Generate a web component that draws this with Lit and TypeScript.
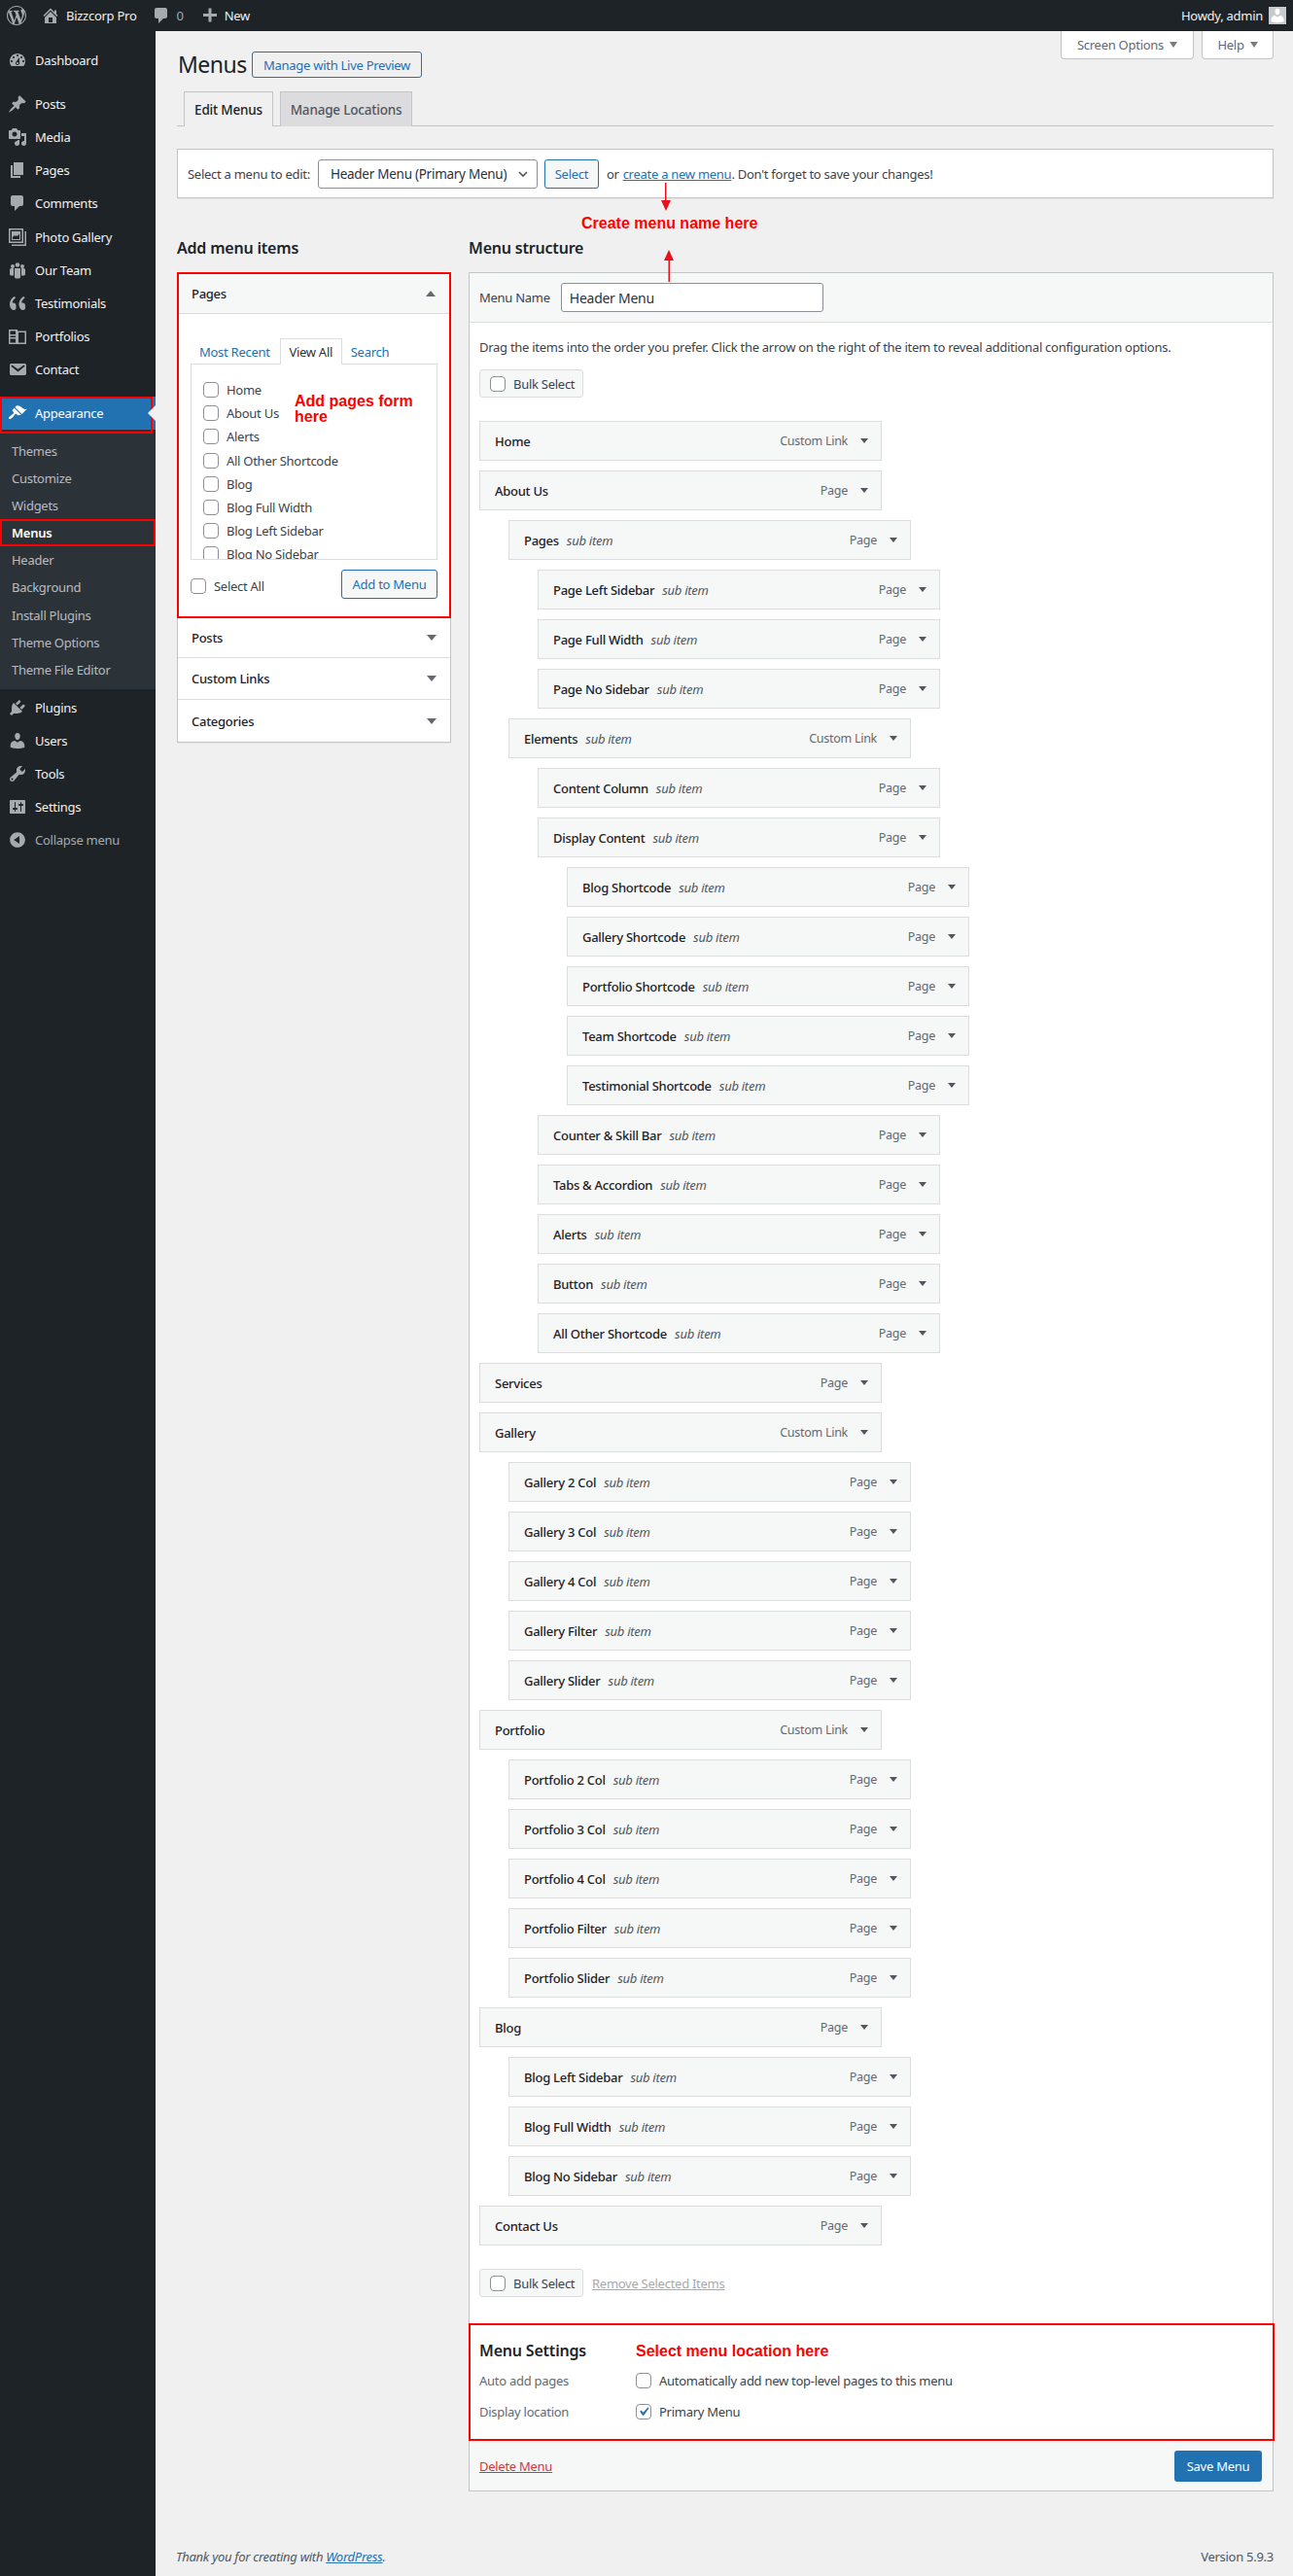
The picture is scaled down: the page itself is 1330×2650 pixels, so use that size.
import { LitElement, html, css, svg } from "lit";
import { customElement } from "lit/decorators.js";

const I: Record<string, any> = {
  wp: svg`<path d="M20 10c0-5.51-4.49-10-10-10C4.48 0 0 4.49 0 10c0 5.52 4.48 10 10 10 5.51 0 10-4.48 10-10zM7.78 15.37L4.37 6.22c.55-.02 1.17-.08 1.17-.08.5-.06.44-1.13-.06-1.11 0 0-1.45.11-2.37.11-.18 0-.37 0-.58-.01C4.12 2.69 6.87 1.11 10 1.11c2.33 0 4.45.87 6.05 2.34-.68-.11-1.65.39-1.65 1.58 0 .74.45 1.36.9 2.1.35.61.55 1.36.55 2.46 0 1.49-1.4 5-1.4 5l-3.03-8.37c.54-.02.82-.17.82-.17.5-.05.44-1.25-.06-1.22 0 0-1.44.12-2.38.12-.87 0-2.33-.12-2.33-.12-.5-.03-.56 1.2-.06 1.22l.92.08 1.26 3.41zM17.41 10c.24-.64.74-1.87.43-4.25.7 1.29 1.05 2.71 1.05 4.25 0 3.29-1.73 6.24-4.4 7.78.97-2.59 1.94-5.2 2.92-7.78zM6.1 18.09C3.12 16.65 1.11 13.53 1.11 10c0-1.3.23-2.48.72-3.59C3.25 10.3 4.67 14.2 6.1 18.09zm4.03-6.63l2.58 6.98c-.86.29-1.76.45-2.71.45-.79 0-1.57-.11-2.29-.33.81-2.38 1.62-4.74 2.42-7.1z"/>`,
  home: svg`<path d="M16 8.5l1.53 1.53-1.06 1.06L10 4.62l-6.47 6.47-1.06-1.06L10 2.5l4 4v-2h2v4zm-6-2.46l6 5.99V18H4v-5.97zM12 17v-5H8v5h4z"/>`,
  comment: svg`<path d="M5 2h9c1.1 0 2 .9 2 2v7c0 1.1-.9 2-2 2h-2l-5 5v-5H5c-1.1 0-2-.9-2-2V4c0-1.1.9-2 2-2z"/>`,
  plus: svg`<path d="M17 8v3h-5.500v5.500h-3V11H3V8h5.500V2.500h3V8z"/>`,
  dash: svg`<path d="M3.76 16h12.48c1.1-1.37 1.76-3.11 1.76-5 0-4.42-3.58-8-8-8s-8 3.58-8 8c0 1.89.66 3.63 1.76 5zM10 4c.55 0 1 .45 1 1s-.45 1-1 1-1-.45-1-1 .45-1 1-1zM6 6c.55 0 1 .45 1 1s-.45 1-1 1-1-.45-1-1 .45-1 1-1zm8 0c.55 0 1 .45 1 1s-.45 1-1 1-1-.45-1-1 .45-1 1-1zm-5.37 5.55L12 7v6c0 1.1-.9 2-2 2s-2-.9-2-2c0-.57.24-1.08.63-1.45zM4 10c.55 0 1 .45 1 1s-.45 1-1 1-1-.45-1-1 .45-1 1-1zm12 0c.55 0 1 .45 1 1s-.45 1-1 1-1-.45-1-1 .45-1 1-1zm-5 3c0-.55-.45-1-1-1s-1 .45-1 1 .45 1 1 1 1-.45 1-1z"/>`,
  post: svg`<path d="M10.44 3.02l1.82-1.82 6.36 6.35-1.83 1.82c-1.05-.68-2.48-.57-3.41.36l-.75.75c-.92.93-1.04 2.35-.35 3.41l-1.83 1.82-2.41-2.41-2.8 2.79c-.42.42-3.38 2.71-3.8 2.29s1.86-3.39 2.28-3.81l2.79-2.79L4.1 9.36l1.83-1.82c1.05.69 2.48.57 3.4-.36l.75-.75c.93-.92 1.05-2.35.36-3.41z"/>`,
  media: svg`<path d="M13 11V4c0-.55-.45-1-1-1h-1.67L9 1H5L3.67 3H2c-.55 0-1 .45-1 1v7c0 .55.45 1 1 1h10c.55 0 1-.45 1-1zM7 4.5c1.38 0 2.5 1.12 2.5 2.5S8.38 9.5 7 9.5 4.5 8.38 4.5 7 5.62 4.5 7 4.5zM14 6h5v10.5c0 1.38-1.12 2.5-2.5 2.5S14 17.88 14 16.5s1.12-2.5 2.5-2.5c.17 0 .34.02.5.05V9h-3V6zm-4 8.05V13h2v3.5c0 1.38-1.12 2.5-2.5 2.5S7 17.88 7 16.5 8.12 14 9.5 14c.17 0 .34.02.5.05z"/>`,
  page: svg`<path d="M6 15V2h10v13H6zm-1 1h8v2H3V5h2v11z"/>`,
  gallery: svg`<path fill-rule="evenodd" d="M1 1h15v15H1zM2.500 2.500v12h12v-12zM4 4h9v9H4zM5 12h7V6.500l-2 2.500-1-1-1 1.300-1-1.300-2 2zM17.500 4H19v15H4v-1.500h13.500z"/>`,
  team: svg`<circle cx="5" cy="6" r="2"/><circle cx="10" cy="4.500" r="2.300"/><circle cx="15" cy="6" r="2"/><path d="M2 9.500c0-1 1-1.500 2-1.500h2v7.500H4c-1 0-2-.5-2-1.500zM7 8h6v9c0 1-1 1.500-3 1.500S7 18 7 17zM14 8h2c1 0 2 .5 2 1.500V14c0 1-1 1.500-2 1.500h-2z"/>`,
  quote: svg`<path d="M8.54 12.74c0-.87-.24-1.61-.72-2.22-.73-.92-2.14-1.03-2.96-.85-.34-1.95 1.3-4.12 3.42-5.45L6.65 3C3.45 5.03 1.5 8.56 2.09 12.44c.42 2.75 2.09 4.56 4.06 4.56 1.22 0 2.39-.9 2.39-2.26v-2zm9.52 0c0-.87-.24-1.61-.72-2.22-.73-.92-2.14-1.03-2.96-.85-.33-1.95 1.3-4.12 3.43-5.45L16.17 3c-3.2 2.03-5.15 5.56-4.56 9.44.42 2.75 2.09 4.56 4.05 4.56 1.22 0 2.4-.9 2.4-2.26v-2z"/>`,
  folio: svg`<path fill-rule="evenodd" d="M1 3h9v1.500h9V18H1zM2.500 4.500V8H8V4.500zM2.500 9.500V11H8V9.500zM2.500 12.500v4H8v-4zM11 6v10.500h6.500V6z"/>`,
  mail: svg`<path d="M3.87 4h13.25C18.37 4 19 4.59 19 5.79v8.42c0 1.19-.63 1.79-1.88 1.79H3.87c-1.25 0-1.88-.6-1.88-1.79V5.79c0-1.2.63-1.79 1.88-1.79zm6.62 8.6l6.74-5.53c.24-.2.43-.66.13-1.07-.29-.41-.82-.42-1.17-.17l-5.7 3.86L4.8 5.83c-.35-.25-.88-.24-1.17.17-.3.41-.11.87.13 1.07z"/>`,
  brush: svg`<path d="M14.48 11.06L7.41 3.99l1.5-1.5c.5-.56 2.3-.47 3.51.32 1.21.8 1.43 1.28 2.91 2.1 1.18.64 2.45 1.26 4.45.85zm-.71.71L6.7 4.7 4.93 6.47c-.39.39-.39 1.02 0 1.41l1.06 1.06c.39.39.39 1.03 0 1.42-.6.6-1.43 1.11-2.21 1.69-.35.26-.7.53-1.01.84C1.43 13.23.4 14.98 1.2 15.78c.8.79 2.55-.23 3.91-1.57.31-.31.58-.66.85-1.02.57-.78 1.08-1.61 1.69-2.21.39-.39 1.02-.39 1.41 0l1.06 1.06c.39.39 1.02.39 1.41 0z"/>`,
  plug: svg`<path d="M13.11 4.36L9.87 7.6 8 5.73l3.24-3.24c.35-.34 1.05-.2 1.56.32.52.51.66 1.21.31 1.55zm-8 1.77l.91-1.12 9.01 9.01-1.19.84c-.71.71-2.63 1.16-3.82 1.16H6.14L4.9 17.26c-.59.59-1.54.59-2.12 0-.59-.58-.59-1.53 0-2.12l1.24-1.24v-3.88c0-1.13.4-3.19 1.09-3.89zm7.26 3.97l3.24-3.24c.34-.35 1.04-.21 1.55.31.52.51.66 1.21.31 1.55l-3.24 3.25z"/>`,
  users: svg`<path d="M10 9.25c-2.27 0-2.73-3.44-2.73-3.44C7 4.02 7.82 2 9.97 2c2.16 0 2.98 2.02 2.71 3.81 0 0-.41 3.44-2.68 3.44zm0 2.57L12.72 10c2.39 0 4.52 2.33 4.52 4.53v2.49s-3.65 1.13-7.24 1.13c-3.65 0-7.24-1.13-7.24-1.13v-2.49c0-2.25 1.94-4.48 4.47-4.48z"/>`,
  tools: svg`<path d="M16.68 9.77c-1.34 1.34-3.3 1.67-4.95.99l-5.41 6.52c-.99.99-2.59.99-3.58 0s-.99-2.59 0-3.57l6.52-5.42c-.68-1.65-.35-3.61.99-4.95 1.28-1.28 3.12-1.62 4.72-1.06l-2.89 2.89 2.82 2.82 2.86-2.87c.53 1.58.18 3.39-1.08 4.65zM3.81 16.21c.4.39 1.04.39 1.43 0 .4-.4.4-1.04 0-1.43-.39-.4-1.03-.4-1.43 0-.39.39-.39 1.03 0 1.43z"/>`,
  settings: svg`<path d="M18 16V4c0-.55-.45-1-1-1H3c-.55 0-1 .45-1 1v12c0 .55.45 1 1 1h14c.55 0 1-.45 1-1zM8 11h1c.55 0 1 .45 1 1s-.45 1-1 1H8v1.5c0 .28-.22.5-.5.5s-.5-.22-.5-.5V13H6c-.55 0-1-.45-1-1s.45-1 1-1h1V5.5c0-.28.22-.5.5-.5s.5.22.5.5V11zm5-2h-1c-.55 0-1-.45-1-1s.45-1 1-1h1V5.5c0-.28.22-.5.5-.5s.5.22.5.5V7h1c.55 0 1 .45 1 1s-.45 1-1 1h-1v5.5c0 .28-.22.5-.5.5s-.5-.22-.5-.5V9z"/>`,
  collapse: svg`<path fill-rule="evenodd" d="M10 2.16c4.33 0 7.84 3.51 7.84 7.84s-3.51 7.84-7.84 7.84S2.16 14.33 2.16 10 5.67 2.16 10 2.16zM12 13.88V6.12L6.18 10z"/>`,
};

const icon = (n: string, cls = "ic") => html`<svg class=${cls} viewBox="0 0 20 20" fill="currentColor" aria-hidden="true">${I[n]}</svg>`;
const tri = (up = false) => html`<span class=${up ? "tri up" : "tri"}></span>`;

const TOP1: [string, string][] = [["Posts", "post"], ["Media", "media"], ["Pages", "page"], ["Comments", "comment"], ["Photo Gallery", "gallery"], ["Our Team", "team"], ["Testimonials", "quote"], ["Portfolios", "folio"], ["Contact", "mail"]];
const SUB = ["Themes", "Customize", "Widgets", "Menus", "Header", "Background", "Install Plugins", "Theme Options", "Theme File Editor"];
const TOP2: [string, string][] = [["Plugins", "plug"], ["Users", "users"], ["Tools", "tools"], ["Settings", "settings"]];
const PAGES = ["Home", "About Us", "Alerts", "All Other Shortcode", "Blog", "Blog Full Width", "Blog Left Sidebar", "Blog No Sidebar"];
const ITEMS: [string, string, number][] = [
  ["Home", "Custom Link", 0], ["About Us", "Page", 0], ["Pages", "Page", 1], ["Page Left Sidebar", "Page", 2], ["Page Full Width", "Page", 2], ["Page No Sidebar", "Page", 2],
  ["Elements", "Custom Link", 1], ["Content Column", "Page", 2], ["Display Content", "Page", 2], ["Blog Shortcode", "Page", 3], ["Gallery Shortcode", "Page", 3], ["Portfolio Shortcode", "Page", 3], ["Team Shortcode", "Page", 3], ["Testimonial Shortcode", "Page", 3],
  ["Counter & Skill Bar", "Page", 2], ["Tabs & Accordion", "Page", 2], ["Alerts", "Page", 2], ["Button", "Page", 2], ["All Other Shortcode", "Page", 2], ["Services", "Page", 0],
  ["Gallery", "Custom Link", 0], ["Gallery 2 Col", "Page", 1], ["Gallery 3 Col", "Page", 1], ["Gallery 4 Col", "Page", 1], ["Gallery Filter", "Page", 1], ["Gallery Slider", "Page", 1],
  ["Portfolio", "Custom Link", 0], ["Portfolio 2 Col", "Page", 1], ["Portfolio 3 Col", "Page", 1], ["Portfolio 4 Col", "Page", 1], ["Portfolio Filter", "Page", 1], ["Portfolio Slider", "Page", 1],
  ["Blog", "Page", 0], ["Blog Left Sidebar", "Page", 1], ["Blog Full Width", "Page", 1], ["Blog No Sidebar", "Page", 1], ["Contact Us", "Page", 0],
];

@customElement("app-root")
export class AppRoot extends LitElement {
  static styles = css`
    :host { display: block; position: relative; width: 1330px; height: 2650px; overflow: hidden; background: #f0f0f1; color: #3c434a; font: 13px/20px "Noto Sans", sans-serif; letter-spacing: -0.27px; }
    * { box-sizing: border-box; }
    a { color: #2271b1; }
    .bar { height: 32px; background: #1d2327; color: #f0f0f1; display: flex; align-items: center; }
    .bar .ic { width: 20px; height: 20px; color: #a7aaad; flex: none; }
    .bar .wp { margin-left: 7px; }
    .bar .home { margin-left: 15px; }
    .bar .t { margin-left: 6px; }
    .bar .cm { margin-left: 16px; }
    .bar .zero { margin-left: 5px; color: #a7aaad; }
    .bar .pl { margin-left: 17px; }
    .bar .n { margin-left: 5px; }
    .howdy { margin-left: auto; margin-right: 6px; }
    .avatar { width: 18px; height: 18px; background: #c9cacb; margin-right: 7px; display: flex; align-items: flex-end; justify-content: center; overflow: hidden; }
    .avatar svg { width: 18px; height: 18px; color: #fff; }
    .shell { display: flex; align-items: flex-start; }
    .side { width: 160px; height: 2618px; background: #1d2327; padding-top: 13px; flex: none; position: relative; }
    .mi { height: 34.1px; display: flex; align-items: center; color: #f0f0f1; font-size: 13px; }
    .mi .ic { width: 20px; height: 20px; margin: 0 8px; color: #a7aaad; flex: none; }
    .mi.dim { color: #a7aaad; }
    .sep { height: 11px; }
    .sep2 { height: 11px; }
    .mi.cur { background: #2271b1; color: #fff; position: relative; height: 34px; }
    .mi.cur .ic { color: #fff; }
    .mi.cur::after { content: ""; position: absolute; right: 0; top: 9px; border: 8px solid transparent; border-right-color: #f0f0f1; border-left-width: 0; }
    .mi.cur::before { content: ""; position: absolute; left: 0; top: 0; width: 153px; height: 34px; border: 2px solid #f00; }
    .subm { background: #2c3338; padding: 8px 0 6px; margin-bottom: 2px; }
    .si { height: 28.1px; display: flex; align-items: center; padding-left: 12px; color: #b8bcc0; font-size: 13px; position: relative; }
    .si.on { color: #fff; font-weight: 600; outline: 2px solid #f00; outline-offset: -2px; }
    .main { flex: 1; position: relative; padding: 21px 20px 0 22px; min-width: 0; }
    .meta { position: absolute; right: 20px; top: 0; display: flex; gap: 8px; }
    .mt { height: 29px; background: #fff; border: 1px solid #c3c4c7; border-top: 0; border-radius: 0 0 4px 4px; color: #646970; display: flex; align-items: center; justify-content: center; gap: 6px; white-space: nowrap; }
    .mt .tri { border-top-color: #787c82; border-width: 6px 4px 0; }
    .mt.opt { width: 137px; }
    .mt.hlp { width: 74px; }
    .head { display: flex; align-items: center; height: 27px; padding-left: 1px; gap: 9px; }
    h1 { margin: 0; font-size: 23px; font-weight: 400; color: #1d2327; line-height: 29px; letter-spacing: -0.5px; width: 67px; }
    .btn { border: 1px solid #2271b1; border-radius: 3px; color: #2271b1; background: #f6f7f7; display: inline-flex; align-items: center; justify-content: center; }
    .head .btn { width: 175px; height: 27px; background: #f0f0f1; }
    .tabs { margin-top: 14px; height: 36px; border-bottom: 1px solid #c3c4c7; display: flex; gap: 7px; padding-left: 7px; }
    .tab { height: 36px; border: 1px solid #c3c4c7; border-bottom: 0; background: #dcdcde; color: #50575e; font-weight: 500; font-size: 13.5px; letter-spacing: -0.2px; display: flex; align-items: center; justify-content: center; width: 136px; }
    .tab.act { background: #f0f0f1; color: #1d2327; width: 92px; }
    .selbar { margin-top: 23px; height: 51px; background: #fff; border: 1px solid #c3c4c7; display: flex; align-items: center; padding-left: 10px; box-shadow: 0 1px 1px rgba(0,0,0,.04); }
    .sel { width: 226px; height: 30px; margin-left: 8px; border: 1px solid #8c8f94; border-radius: 3px; background: #fff; color: #2c3338; display: flex; align-items: center; justify-content: space-between; padding: 0 8px 0 12px; font-size: 13.5px; }
    .sel svg { width: 12px; height: 12px; color: #50575e; }
    .selbar .btn { width: 56px; height: 30px; margin: 0 8px 0 7px; }
    .selbar a { margin: 0 0 0 4px; }
    .cols { display: flex; gap: 18px; margin-top: 41px; align-items: flex-start; }
    .left { width: 282px; flex: none; }
    .right { width: 828px; flex: none; }
    h2 { margin: 0 0 15px; font-size: 16px; line-height: 20px; font-weight: 600; color: #1d2327; letter-spacing: -0.2px; }
    .acc { background: #fff; border: 1px solid #c3c4c7; border-top: 0; box-shadow: 0 1px 1px rgba(0,0,0,.04); }
    .open { border: 2px solid #f00; height: 356px; margin: 0; background: #fff; position: relative; }
    .ah { height: 41px; display: flex; align-items: center; justify-content: space-between; padding: 0 14px 0 13px; font-weight: 500; color: #1d2327; background: #f6f7f7; border-bottom: 1px solid #dcdcde; }
    .row { height: 43px; display: flex; align-items: center; justify-content: space-between; padding: 0 14px; font-weight: 500; color: #1d2327; border-bottom: 1px solid #dcdcde; background: #fff; }
    .row:first-child { height: 41px; }
    .row:last-child { border-bottom: 0; }
    .tri { width: 0; height: 0; border: solid transparent; border-width: 6px 5px 0; border-top-color: #646970; flex: none; }
    .tri.up { border-width: 0 5px 6px; border-bottom-color: #646970; }
    .ptabs { display: flex; margin: 25px 0 0 12px; height: 26px; align-items: flex-end; position: relative; z-index: 1; }
    .ptabs a { text-decoration: none; height: 25px; display: flex; align-items: center; }
    .ptabs .m { padding: 0 9px; }
    .ptabs .v { width: 64px; justify-content: center; background: #fff; border: 1px solid #dcdcde; border-bottom: 0; color: #2c3338; height: 27px; margin-bottom: -1px; margin-left: 1px; }
    .panel { margin: 0 12px 0 12px; height: 202px; border: 1px solid #dcdcde; overflow: hidden; padding: 14px 12px 0; }
    .ck { display: flex; align-items: center; height: 24.2px; gap: 8px; color: #3c434a; }
    .cb { width: 16px; height: 16px; flex: none; border: 1px solid #8c8f94; border-radius: 4px; background: #fff; display: inline-flex; align-items: center; justify-content: center; }
    .cb svg { width: 18px; height: 18px; color: #2271b1; flex: none; }
    .pf { display: flex; justify-content: space-between; align-items: center; margin: 10px 12px 0; height: 30px; }
    .pf .btn { width: 99px; height: 30px; }
    .pf .ck { margin-top: 4px; }
    .mh { height: 52px; background: #f6f7f7; border: 1px solid #c3c4c7; border-bottom-color: #dcdcde; display: flex; align-items: center; padding: 0 10px; gap: 11px; }
    .mh input { width: 270px; height: 30px; border: 1px solid #8c8f94; border-radius: 3px; padding: 0 8px; font: inherit; font-size: 14px; letter-spacing: inherit; color: #2c3338; background: #fff; }
    .mb { background: #fff; border: 1px solid #c3c4c7; border-width: 0 1px; padding: 15px 10px 27px; }
    .drag { height: 20px; margin-bottom: 13px; }
    .bulk { width: 107px; height: 29px; border: 1px solid #dcdcde; border-radius: 3px; background: #f6f7f7; display: flex; align-items: center; gap: 8px; padding-left: 10px; color: #3c434a; }
    .list { margin: 24px 0 24px; display: flex; flex-direction: column; gap: 10px; }
    .it { width: 414px; height: 41px; background: #f6f7f7; border: 1px solid #dcdcde; display: flex; align-items: center; padding: 0 13px 0 15px; }
    .it b { font-weight: 500; color: #1d2327; }
    .it i { margin-left: 8px; color: #50575e; }
    .it .ty { margin-left: auto; color: #646970; margin-right: 13px; font-size: 12.5px; }
    .it .tri { border-width: 5px 4px 0; border-top-color: #50575e; }
    .bf { display: flex; align-items: center; gap: 9px; }
    .bf a { color: #a7aaad; }
    .sets { height: 121px; background: #fff; border: 2px solid #f00; margin: 0 -1px 0 0; padding: 16px 9px 0; position: relative; }
    .sets h3 { margin: 0 0 11px; font-size: 16px; font-weight: 600; line-height: 20px; color: #1d2327; letter-spacing: -0.2px; }
    .sr { display: flex; height: 32px; align-items: flex-start; }
    .sr > span { width: 161px; color: #646970; }
    .sr .ck { height: 20px; }
    .mf { height: 52px; background: #f6f7f7; border: 1px solid #c3c4c7; border-top: 0; display: flex; align-items: center; justify-content: space-between; padding: 0 11px 0 10px; }
    .mf a { color: #d63638; }
    .save { width: 90px; height: 32px; background: #2271b1; color: #fff; border-radius: 3px; display: flex; align-items: center; justify-content: center; }
    .foot { margin-top: 57px; margin-left: -1px; display: flex; justify-content: space-between; color: #50575e; }
    .foot i a { color: #2271b1; }
    .note { position: absolute; color: #f00; font: bold 16px/16px "Liberation Sans", sans-serif; letter-spacing: 0; white-space: nowrap; }
    .arrow { position: absolute; }
  `;

  render() {
    return html`
      <div class="bar">
        ${icon("wp", "ic wp")}
        ${icon("home", "ic home")}<span class="t">Bizzcorp Pro</span>
        ${icon("comment", "ic cm")}<span class="zero">0</span>
        ${icon("plus", "ic pl")}<span class="n">New</span>
        <span class="howdy">Howdy, admin</span>
        <span class="avatar"><svg viewBox="0 0 20 20" fill="currentColor">${I.users}</svg></span>
      </div>
      <div class="shell">
        <nav class="side">
          <div class="mi">${icon("dash")}Dashboard</div>
          <div class="sep"></div>
          ${TOP1.map(([t, i]) => html`<div class="mi">${icon(i)}${t}</div>`)}
          <div class="sep2"></div>
          <div class="mi cur">${icon("brush")}Appearance</div>
          <div class="subm">${SUB.map((s) => html`<div class=${s === "Menus" ? "si on" : "si"}>${s}</div>`)}</div>
          ${TOP2.map(([t, i]) => html`<div class="mi">${icon(i)}${t}</div>`)}
          <div class="mi dim">${icon("collapse")}Collapse menu</div>
        </nav>
        <main class="main">
          <div class="meta">
            <div class="mt opt">Screen Options ${tri()}</div>
            <div class="mt hlp">Help ${tri()}</div>
          </div>
          <div class="head"><h1>Menus</h1><span class="btn">Manage with Live Preview</span></div>
          <div class="tabs"><div class="tab act">Edit Menus</div><div class="tab">Manage Locations</div></div>
          <div class="selbar">
            <span>Select a menu to edit:</span>
            <div class="sel"><span>Header Menu (Primary Menu)</span><svg viewBox="0 0 12 12" fill="none" stroke="currentColor" stroke-width="1.6"><path d="M2 4l4 4 4-4"/></svg></div>
            <span class="btn">Select</span>
            <span>or</span><a href="#">create a new menu</a><span>. Don't forget to save your changes!</span>
          </div>
          <div class="cols">
            <section class="left">
              <h2>Add menu items</h2>
              <div class="open">
                <div class="ah">Pages ${tri(true)}</div>
                <div class="ptabs"><a class="m" href="#">Most Recent</a><a class="v" href="#">View All</a><a class="m" href="#">Search</a></div>
                <div class="panel">${PAGES.map((p) => html`<div class="ck"><span class="cb"></span>${p}</div>`)}</div>
                <div class="pf"><div class="ck"><span class="cb"></span>Select All</div><span class="btn">Add to Menu</span></div>
              </div>
              <div class="acc">
                <div class="row">Posts ${tri()}</div>
                <div class="row">Custom Links ${tri()}</div>
                <div class="row">Categories ${tri()}</div>
              </div>
            </section>
            <section class="right">
              <h2>Menu structure</h2>
              <div class="mh"><label>Menu Name</label><input value="Header Menu" /></div>
              <div class="mb">
                <div class="drag">Drag the items into the order you prefer. Click the arrow on the right of the item to reveal additional configuration options.</div>
                <div class="bulk"><span class="cb"></span>Bulk Select</div>
                <div class="list">
                  ${ITEMS.map(([t, ty, d]) => html`<div class="it" style="margin-left:${d * 30}px"><b>${t}</b>${d > 0 ? html`<i>sub item</i>` : ""}<span class="ty">${ty}</span>${tri()}</div>`)}
                </div>
                <div class="bf"><div class="bulk"><span class="cb"></span>Bulk Select</div><a href="#">Remove Selected Items</a></div>
              </div>
              <div class="sets">
                <h3>Menu Settings</h3>
                <div class="sr"><span>Auto add pages</span><div class="ck"><span class="cb"></span>Automatically add new top-level pages to this menu</div></div>
                <div class="sr"><span>Display location</span><div class="ck"><span class="cb"><svg viewBox="0 0 20 20" fill="currentColor"><path d="M14.83 4.89l1.34.94-5.81 8.38H9.02L5.78 9.67l1.34-1.25 2.57 2.4z"/></svg></span>Primary Menu</div></div>
              </div>
              <div class="mf"><a href="#">Delete Menu</a><span class="save">Save Menu</span></div>
            </section>
          </div>
          <div class="foot"><i>Thank you for creating with <a href="#">WordPress</a>.</i><span>Version 5.9.3</span></div>
        </main>
      </div>
      <span class="note" style="left:303px;top:405px">Add pages form<br />here</span>
      <span class="note" style="left:598px;top:222px">Create menu name here</span>
      <span class="note" style="left:654px;top:2411px">Select menu location here</span>
      <svg class="arrow" style="left:678px;top:188px" width="14" height="30" viewBox="0 0 14 30" fill="#e8111c"><path d="M6 0h1.500v18H12l-5 11-5-11h4z"/></svg>
      <svg class="arrow" style="left:681px;top:257px" width="14" height="34" viewBox="0 0 14 34" fill="#e8111c"><path d="M7 0l5 11H8v22H6.500V11H2z"/></svg>
    `;
  }
}
